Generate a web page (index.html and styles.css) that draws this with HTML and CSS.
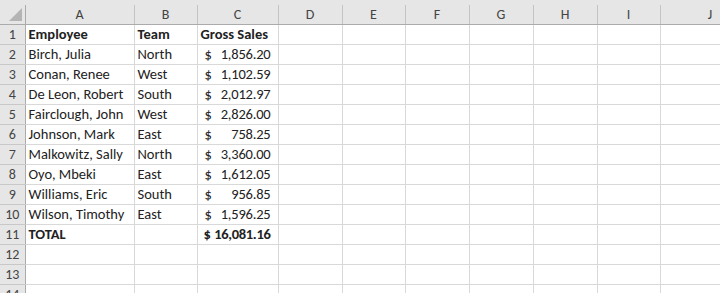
FILE: index.html
```html
<!DOCTYPE html>
<html>
<head>
<meta charset="utf-8">
<link rel="stylesheet" href="styles.css">
</head>
<body>
<div class="sheet">
  <div class="strip"></div>
  <table class="grid">
    <colgroup>
      <col class="c-rh"><col class="c-a"><col class="c-b"><col class="c-c"><col class="c-d"><col class="c-e"><col class="c-f"><col class="c-g"><col class="c-h"><col class="c-i"><col class="c-j">
    </colgroup>
    <thead>
      <tr>
        <th class="corner"><span class="tri"></span></th>
        <th>A</th><th>B</th><th>C</th><th>D</th><th>E</th><th>F</th><th>G</th><th>H</th><th>I</th><th class="last">J</th>
      </tr>
    </thead>
    <tbody>
      <tr><th>1</th><td class="b">Employee</td><td class="b">Team</td><td class="b">Gross Sales</td><td></td><td></td><td></td><td></td><td></td><td></td><td></td></tr>
      <tr><th>2</th><td>Birch, Julia</td><td>North</td><td class="acc"><div class="accv"><span>$</span><span class="num">1,856.20</span></div></td><td></td><td></td><td></td><td></td><td></td><td></td><td></td></tr>
      <tr><th>3</th><td>Conan, Renee</td><td>West</td><td class="acc"><div class="accv"><span>$</span><span class="num">1,102.59</span></div></td><td></td><td></td><td></td><td></td><td></td><td></td><td></td></tr>
      <tr><th>4</th><td>De Leon, Robert</td><td>South</td><td class="acc"><div class="accv"><span>$</span><span class="num">2,012.97</span></div></td><td></td><td></td><td></td><td></td><td></td><td></td><td></td></tr>
      <tr><th>5</th><td>Fairclough, John</td><td>West</td><td class="acc"><div class="accv"><span>$</span><span class="num">2,826.00</span></div></td><td></td><td></td><td></td><td></td><td></td><td></td><td></td></tr>
      <tr><th>6</th><td>Johnson, Mark</td><td>East</td><td class="acc"><div class="accv"><span>$</span><span class="num">758.25</span></div></td><td></td><td></td><td></td><td></td><td></td><td></td><td></td></tr>
      <tr><th>7</th><td>Malkowitz, Sally</td><td>North</td><td class="acc"><div class="accv"><span>$</span><span class="num">3,360.00</span></div></td><td></td><td></td><td></td><td></td><td></td><td></td><td></td></tr>
      <tr><th>8</th><td>Oyo, Mbeki</td><td>East</td><td class="acc"><div class="accv"><span>$</span><span class="num">1,612.05</span></div></td><td></td><td></td><td></td><td></td><td></td><td></td><td></td></tr>
      <tr><th>9</th><td>Williams, Eric</td><td>South</td><td class="acc"><div class="accv"><span>$</span><span class="num">956.85</span></div></td><td></td><td></td><td></td><td></td><td></td><td></td><td></td></tr>
      <tr><th>10</th><td>Wilson, Timothy</td><td>East</td><td class="acc"><div class="accv"><span>$</span><span class="num">1,596.25</span></div></td><td></td><td></td><td></td><td></td><td></td><td></td><td></td></tr>
      <tr><th>11</th><td class="b">TOTAL</td><td></td><td class="acc b"><div class="accv total"><span>$</span><span class="num">16,081.16</span></div></td><td></td><td></td><td></td><td></td><td></td><td></td><td></td></tr>
      <tr><th>12</th><td></td><td></td><td></td><td></td><td></td><td></td><td></td><td></td><td></td><td></td></tr>
      <tr><th>13</th><td></td><td></td><td></td><td></td><td></td><td></td><td></td><td></td><td></td><td></td></tr>
      <tr><th>14</th><td></td><td></td><td></td><td></td><td></td><td></td><td></td><td></td><td></td><td></td></tr>
    </tbody>
  </table>
</div>
</body>
</html>
```

FILE: styles.css
```css
html, body {
  margin: 0;
  padding: 0;
  background: #ffffff;
  overflow: hidden;
}
.sheet {
  width: 720px;
  height: 293px;
  overflow: hidden;
  font-family: Carlito, Calibri, Lato, "Liberation Sans", sans-serif;
  font-size: 14.5px;
  color: #222222;
}
.strip {
  height: 5px;
  width: 760px;
  background: #e6e6e6;
}
.grid {
  border-collapse: collapse;
  table-layout: fixed;
  width: 760px;
}
.c-rh { width: 25px; }
.c-a { width: 109px; }
.c-b { width: 63px; }
.c-c { width: 81px; }
.c-d { width: 64px; }
.c-e { width: 63px; }
.c-f { width: 64px; }
.c-g { width: 64px; }
.c-h { width: 64px; }
.c-i { width: 63px; }
.c-j { width: 100px; }

thead th {
  height: 19px;
  padding: 0;
  background: #e6e6e6;
  color: #444444;
  font-weight: normal;
  font-size: 14px;
  text-align: center;
  border-right: 1px solid #c4c4c4;
  border-bottom: 1px solid #ababab;
  line-height: 19px;
}
thead th.corner {
  position: relative;
  border-right: 1px solid #ababab;
}
.tri {
  position: absolute;
  right: 3px;
  bottom: 3px;
  width: 0;
  height: 0;
  border-left: 13px solid transparent;
  border-bottom: 13px solid #b4b4b4;
}
tbody th {
  height: 19px;
  padding: 0;
  background: #e6e6e6;
  color: #444444;
  font-weight: normal;
  font-size: 14px;
  text-align: center;
  border-right: 1px solid #ababab;
  border-bottom: 1px solid #c8c8c8;
  line-height: 19px;
}
td {
  height: 19px;
  padding: 0 2px 0 3px;
  border-right: 1px solid #d9d9d9;
  border-bottom: 1px solid #d9d9d9;
  white-space: nowrap;
  overflow: hidden;
  line-height: 19px;
  vertical-align: middle;
}
td.b {
  font-weight: bold;
}
td.acc {
  padding: 0;
}
.accv {
  display: flex;
  justify-content: space-between;
  padding: 0 7px 0 7px;
}
.accv .num {
  letter-spacing: -0.2px;
}
.accv.total {
  padding: 0 7px 0 6px;
}
.accv.total .num {
  letter-spacing: -0.3px;
}
```
